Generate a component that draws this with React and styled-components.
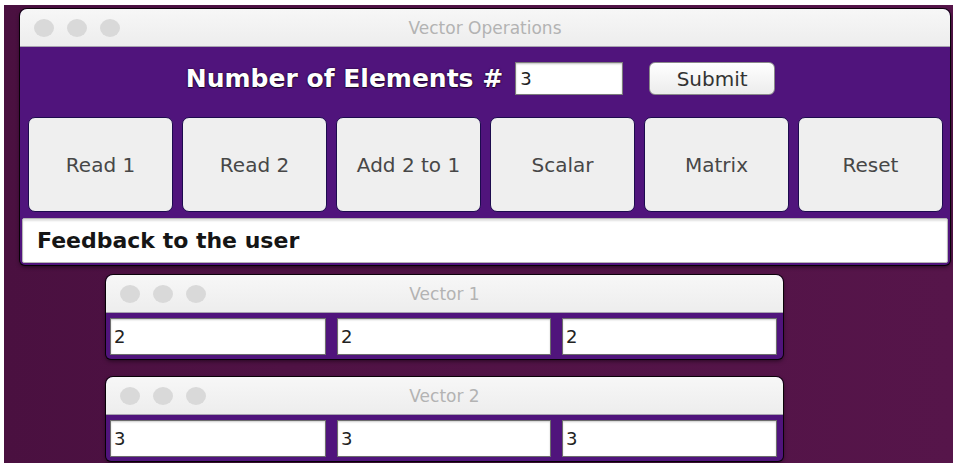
import React from "react";
import styled, { createGlobalStyle } from "styled-components";

const GlobalStyle = createGlobalStyle`
  html, body {
    margin: 0;
    padding: 0;
    background: #ffffff;
    overflow: hidden;
  }
`;

const Desktop = styled.div`
  margin: 5px 0 0 4px;
  height: 458px;
  padding: 4px 0 0 16px;
  box-sizing: border-box;
  overflow: hidden;
  background: linear-gradient(90deg, #4a1040 0%, #4f1244 30%, #56154a 100%);
  font-family: "DejaVu Sans", "Liberation Sans", sans-serif;
`;

const Window = styled.div`
  width: ${(p) => p.$width}px;
  margin: ${(p) => p.$margin};
  border-radius: 7px 7px 5px 5px;
  overflow: hidden;
  background: #50147c;
  box-shadow: 0 0 0 1px rgba(0, 0, 0, 0.85), 0 2px 4px rgba(0, 0, 0, 0.55);
`;

const TitleBar = styled.div`
  position: relative;
  height: 38px;
  display: flex;
  align-items: center;
  justify-content: center;
  background: linear-gradient(180deg, #f7f7f7 0%, #ededed 100%);
  border-bottom: 1px solid #a8a3b0;
  box-sizing: border-box;
`;

const Lights = styled.div`
  position: absolute;
  left: 14px;
  top: 10px;
  display: flex;
  gap: 13px;
`;

const Light = styled.span`
  width: 20px;
  height: 18px;
  border-radius: 50%;
  background: #d9d9d9;
`;

const Title = styled.span`
  font-size: ${(p) => p.$size}px;
  color: #b3b3b3;
`;

const Body = styled.div`
  padding: 15px 7px 2px 8px;
`;

const HeaderRow = styled.div`
  display: flex;
  align-items: center;
  justify-content: center;
  height: 33px;
  padding-right: 10px;
`;

const HeaderLabel = styled.span`
  font-weight: bold;
  font-size: 25px;
  color: #ffffff;
  text-shadow: 0 0 2px rgba(0, 0, 0, 0.8), 0 1px 1px rgba(0, 0, 0, 0.6);
  margin-right: 12px;
`;

const CountField = styled.div`
  width: 108px;
  height: 33px;
  box-sizing: border-box;
  background: #ffffff;
  border: 1px solid #7b7b7b;
  box-shadow: inset 0 1px 2px rgba(0, 0, 0, 0.25);
  font-size: 18px;
  color: #222;
  padding: 5px 4px;
  margin-right: 26px;
`;

const SubmitButton = styled.div`
  width: 126px;
  height: 33px;
  box-sizing: border-box;
  border-radius: 6px;
  border: 1px solid #8a8a8a;
  background: linear-gradient(180deg, #ffffff 0%, #ececec 100%);
  display: flex;
  align-items: center;
  justify-content: center;
  font-size: 20px;
  color: #333;
`;

const ButtonRow = styled.div`
  display: grid;
  grid-template-columns: repeat(6, 145px);
  gap: 9px;
  margin-top: 22px;
`;

const OpButton = styled.div`
  height: 95px;
  box-sizing: border-box;
  border-radius: 7px;
  border: 1px solid #1d0b4e;
  background: #efefef;
  display: flex;
  align-items: center;
  justify-content: center;
  font-size: 20px;
  color: #474747;
`;

const Feedback = styled.div`
  height: 45px;
  margin: 6px -5px 0 -6px;
  box-sizing: border-box;
  background: #ffffff;
  border: 1px solid #b5b5b5;
  border-radius: 2px;
  box-shadow: inset 0 2px 2px rgba(0, 0, 0, 0.12);
  display: flex;
  align-items: center;
  padding-left: 14px;
  font-weight: bold;
  font-size: 22px;
  color: #151515;
`;

const FieldRow = styled.div`
  display: grid;
  grid-template-columns: 216px 214px 215px;
  gap: 11px;
  padding: 5px 5px 4px 4px;
`;

const ValueField = styled.div`
  height: 37px;
  box-sizing: border-box;
  background: #ffffff;
  border: 1px solid #6d6d6d;
  box-shadow: inset 0 1px 2px rgba(0, 0, 0, 0.2);
  display: flex;
  align-items: center;
  padding-left: 3px;
  font-size: 18px;
  color: #222;
`;

const operations = ["Read 1", "Read 2", "Add 2 to 1", "Scalar", "Matrix", "Reset"];

const vectors = [
  { name: "Vector 1", values: ["2", "2", "2"], margin: "10px 0 0 86px" },
  { name: "Vector 2", values: ["3", "3", "3"], margin: "18px 0 0 86px" },
];

function TrafficLights() {
  return (
    <Lights>
      <Light />
      <Light />
      <Light />
    </Lights>
  );
}

export default function App() {
  return (
    <>
      <GlobalStyle />
      <Desktop>
        <Window $width={930} $margin="0">
          <TitleBar>
            <TrafficLights />
            <Title $size={17}>Vector Operations</Title>
          </TitleBar>
          <Body>
            <HeaderRow>
              <HeaderLabel>Number of Elements #</HeaderLabel>
              <CountField>3</CountField>
              <SubmitButton>Submit</SubmitButton>
            </HeaderRow>
            <ButtonRow>
              {operations.map((op) => (
                <OpButton key={op}>{op}</OpButton>
              ))}
            </ButtonRow>
            <Feedback>Feedback to the user</Feedback>
          </Body>
        </Window>

        {vectors.map((v) => (
          <Window key={v.name} $width={677} $margin={v.margin}>
            <TitleBar>
              <TrafficLights />
              <Title $size={17}>{v.name}</Title>
            </TitleBar>
            <FieldRow>
              {v.values.map((val, i) => (
                <ValueField key={i}>{val}</ValueField>
              ))}
            </FieldRow>
          </Window>
        ))}
      </Desktop>
    </>
  );
}
